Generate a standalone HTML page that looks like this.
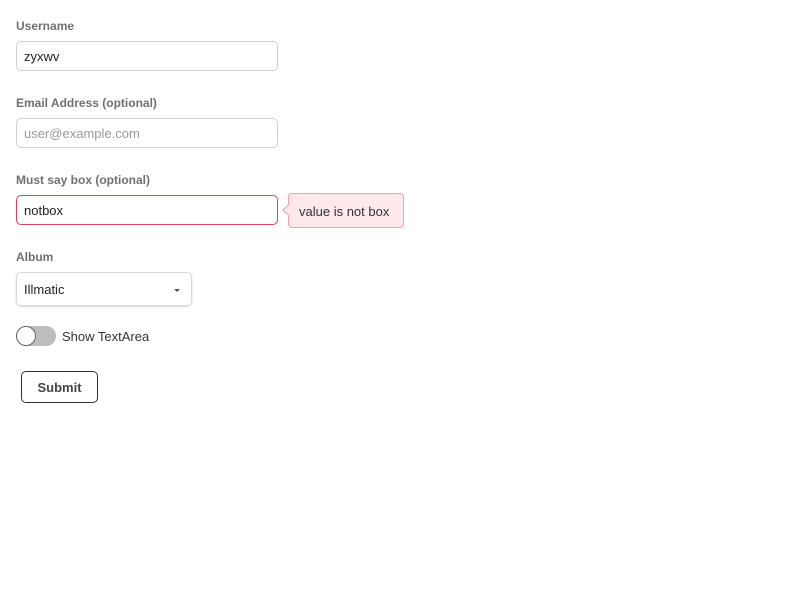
<!DOCTYPE html>
<html><head><style>
body{margin:0;background:#fff;font-family:"Liberation Sans",sans-serif;width:800px;height:600px;position:relative;overflow:hidden}
.l{position:absolute;left:16px;font-size:12px;font-weight:bold;color:#707070}
.in{position:absolute;left:16px;width:260px;height:30px;border:1px solid #cfcfcf;border-radius:5px;box-sizing:border-box;font-size:13px;line-height:30px;padding-left:7px;color:#222}
</style></head><body>
<div class="l" style="top:19px">Username</div>
<div class="in" style="top:41px;width:262px">zyxwv</div>
<div class="l" style="top:96px">Email Address (optional)</div>
<div class="in" style="top:118px;width:262px;color:#999">user@example.com</div>
<div class="l" style="top:173px">Must say box (optional)</div>
<div class="in" style="top:195px;width:262px;border-color:#e0405e">notbox</div>
<div style="position:absolute;left:288px;top:193px;width:116px;height:35px;box-sizing:border-box;border:1px solid #f4a0ae;background:#fde8ec;border-radius:4px;font-size:13px;line-height:35px;padding-left:10px;color:#333">value is not box</div>
<div style="position:absolute;left:284px;top:206px;width:7px;height:7px;background:#fde8ec;border-left:1px solid #f4a0ae;border-bottom:1px solid #f4a0ae;transform:rotate(45deg)"></div>
<div class="l" style="top:250px">Album</div>
<div class="in" style="top:272px;width:176px;height:34px;line-height:34px;border-color:#d8d8d8;box-shadow:0 1px 2px rgba(0,0,0,.15)">Illmatic<span style="position:absolute;right:11px;top:16px;border-left:3px solid transparent;border-right:3px solid transparent;border-top:3px solid #555"></span></div>
<div style="position:absolute;left:16px;top:326px;width:40px;height:20px;border-radius:10px;background:#bdbdbd"></div>
<div style="position:absolute;left:16px;top:326px;width:20px;height:20px;border-radius:50%;background:#fff;border:1px solid #666;box-sizing:border-box"></div>
<div style="position:absolute;left:62px;top:329px;font-size:13px;color:#333">Show TextArea</div>
<div style="position:absolute;left:21px;top:371px;width:77px;height:32px;box-sizing:border-box;border:1px solid #333;border-radius:5px;text-align:center;line-height:32px;font-size:13px;font-weight:bold;color:#444">Submit</div>
</body></html>
